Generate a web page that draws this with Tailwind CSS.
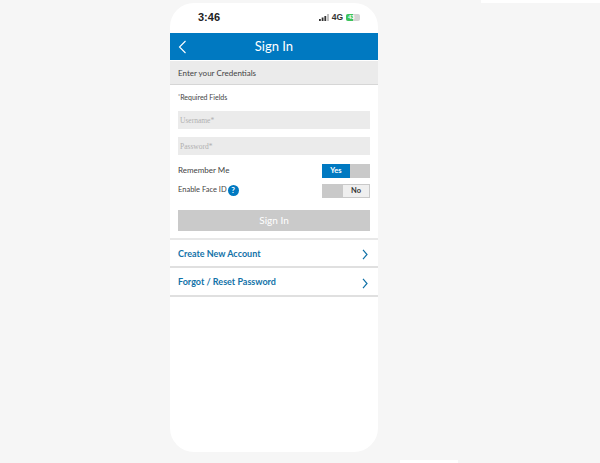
<!DOCTYPE html>
<html lang="en">
<head>
  <meta charset="UTF-8" />
  <title>Sign In</title>
  <script src="https://cdn.jsdelivr.net/npm/@tailwindcss/browser@4"></script>
</head>
<body class="bg-[#f6f6f6] w-[600px] h-[463px] overflow-hidden relative font-['Lato',sans-serif]">
  <!-- white strips where the picture stops short of the edge -->
  <div class="absolute top-0 right-0 w-[119px] h-[3px] bg-white"></div>
  <div class="absolute bottom-0 left-[400px] w-[58px] h-[3px] bg-white"></div>

  <div class="pt-[3px] pl-[170px]">
    <div class="w-[208px] h-[449px] bg-white rounded-[24px] overflow-hidden flex flex-col">

      <!-- Status bar -->
      <div class="h-[30px] flex items-center justify-between pl-[28px] pr-[18px] pb-[2px] shrink-0">
        <span class="text-[11px] font-semibold text-[#222] font-['Liberation_Sans',sans-serif]">3:46</span>
        <div class="flex items-center gap-[3px]">
          <svg width="10" height="7" viewBox="0 0 10 7"><rect x="0" y="5" width="1.8" height="2" fill="#333"/><rect x="2.7" y="3.5" width="1.8" height="3.5" fill="#333"/><rect x="5.4" y="2" width="1.8" height="5" fill="#333"/><rect x="8.1" y="0" width="1.8" height="7" fill="#bbb"/></svg>
          <span class="text-[8.5px] font-semibold text-[#333] font-['Liberation_Sans',sans-serif]">4G</span>
          <div class="w-[14px] h-[7px] rounded-[2px] bg-[#d4d4d4] overflow-hidden flex items-center relative">
            <div class="w-[7px] h-full bg-[#3cc45a]"></div>
            <span class="absolute left-[2px] text-[6px] leading-[7px] font-bold text-white font-['Liberation_Sans',sans-serif]">43</span>
          </div>
        </div>
      </div>

      <!-- Header -->
      <div class="h-[27px] bg-[#0079c1] relative flex items-center justify-center shrink-0">
        <svg class="absolute left-[8px] top-[7px]" width="9" height="14" viewBox="0 0 9 14" fill="none"><path d="M7.5 1 L1.5 7 L7.5 13" stroke="#fff" stroke-width="1.1"/></svg>
        <span class="text-[13px] text-white">Sign In</span>
      </div>

      <!-- Section title -->
      <div class="mt-[1px] h-[24px] bg-[#ebebeb] border-b border-[#d6d6d6] flex items-center pl-[8px] text-[8px] text-[#444] shrink-0">Enter your Credentials</div>

      <!-- Form -->
      <div class="px-[8px] shrink-0">
        <p class="mt-[6px] text-[7px] leading-[12px] text-[#444]"><sup class="text-[5px]">*</sup>Required Fields</p>
        <div class="mt-[8px] h-[18px] pt-[1px] bg-[#ebebeb] flex items-center pl-[2px] text-[7.5px] text-[#b0b0b0] font-['Liberation_Serif',serif]">Username*</div>
        <div class="mt-[8px] h-[18px] pt-[1px] bg-[#ebebeb] flex items-center pl-[2px] text-[7.5px] text-[#b0b0b0] font-['Liberation_Serif',serif]">Password*</div>

        <div class="mt-[9px] h-[14px] flex items-center justify-between">
          <span class="text-[8px] text-[#444] mb-[2px]">Remember Me</span>
          <div class="w-[48px] h-[14px] bg-[#c9c9c9] flex">
            <div class="w-[28px] h-full bg-[#0079c1] flex items-center justify-center text-[7.5px] font-bold text-white">Yes</div>
          </div>
        </div>

        <div class="mt-[6px] h-[14px] flex items-center justify-between">
          <div class="flex items-center gap-[1px] mb-[2px]">
            <span class="text-[7.5px] text-[#444]">Enable Face ID</span>
            <div class="w-[11px] h-[11px] rounded-full bg-[#0079c1] flex items-center justify-center text-[8px] font-bold text-white">?</div>
          </div>
          <div class="w-[48px] h-[14px] bg-[#c9c9c9] flex justify-end">
            <div class="w-[28px] h-full bg-[#efefef] border border-[#c9c9c9] flex items-center justify-center text-[7.5px] font-bold text-[#333]">No</div>
          </div>
        </div>

        <div class="mt-[12px] h-[21px] bg-[#cacaca] flex items-center justify-center text-[10px] text-white">Sign In</div>
      </div>

      <!-- Links -->
      <div class="mt-[7px] border-t-2 border-[#e8e8e8] shrink-0">
        <div class="h-[28px] flex items-center justify-between pl-[8px] pr-[10px] border-b-2 border-[#e0e0e0]">
          <span class="text-[9px] font-bold text-[#1272a8] mt-[1px]">Create New Account</span>
          <svg class="mt-[3px]" width="6" height="11" viewBox="0 0 6 11" fill="none"><path d="M1 .8 L5 5.5 L1 10.2" stroke="#1272a8" stroke-width="1.2"/></svg>
        </div>
        <div class="h-[29px] flex items-center justify-between pl-[8px] pr-[10px] border-b-2 border-[#e0e0e0]">
          <span class="text-[9px] font-bold text-[#1272a8]">Forgot / Reset Password</span>
          <svg class="mt-[3px]" width="6" height="11" viewBox="0 0 6 11" fill="none"><path d="M1 .8 L5 5.5 L1 10.2" stroke="#1272a8" stroke-width="1.2"/></svg>
        </div>
      </div>
    </div>
  </div>
</body>
</html>
